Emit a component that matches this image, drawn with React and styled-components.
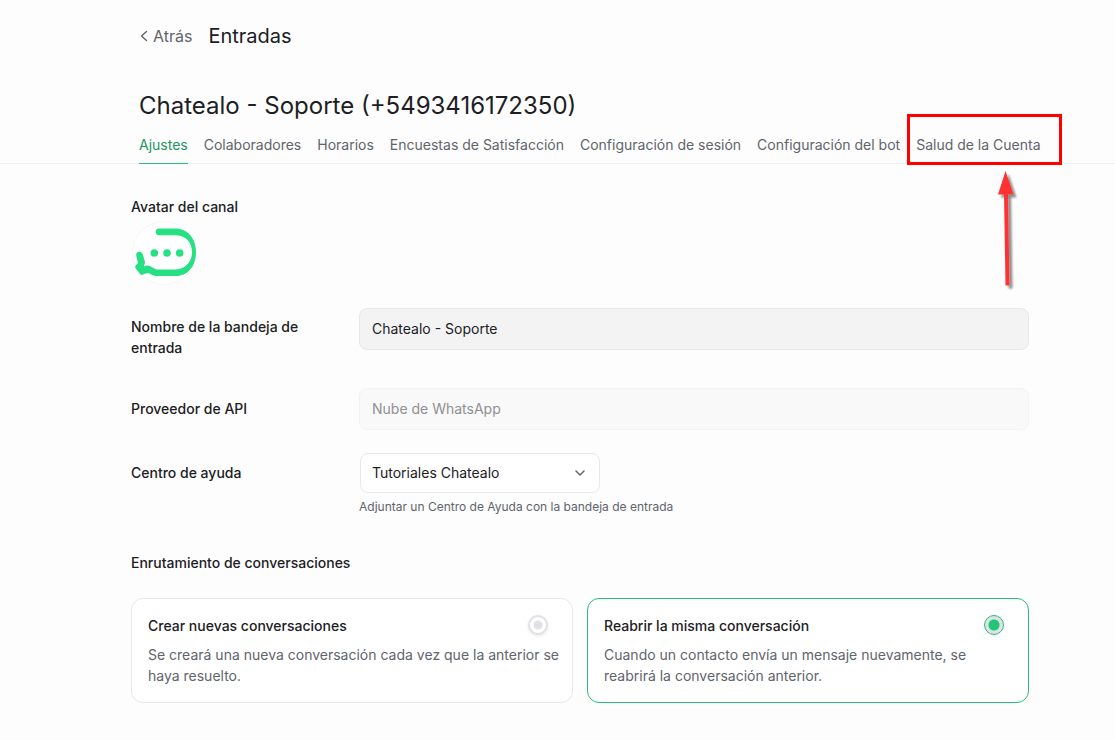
import React, { useState } from "react";
import styled, { createGlobalStyle, css } from "styled-components";

const GlobalStyle = createGlobalStyle`
  *, *::before, *::after { box-sizing: border-box; }
  body {
    margin: 0;
    background: #fdfdfd;
    color: #1c2024;
    font-family: Inter, "Liberation Sans", sans-serif;
    font-size: 14px;
    line-height: 21px;
  }
  h1, h2, h3, p { margin: 0; }
  button, input, select { font: inherit; color: inherit; }
`;

const Page = styled.div`
  padding-bottom: 36px;
`;

const TopBar = styled.header`
  display: flex;
  align-items: center;
  gap: 16px;
  height: 32px;
  margin: 20px 86px 36px 139px;
`;

const BackButton = styled.button`
  display: flex;
  align-items: center;
  gap: 4px;
  padding: 0;
  border: 0;
  background: none;
  color: #60646c;
  font-size: 16px;
  line-height: 24px;
  cursor: pointer;
`;

const PageTitle = styled.h1`
  font-size: 20px;
  line-height: 32px;
  font-weight: 400;
`;

const InboxTitle = styled.h2`
  padding-left: 139px;
  font-size: 24px;
  line-height: 36px;
  font-weight: 400;
`;

const TabBar = styled.nav`
  display: flex;
  gap: 16px;
  padding-left: 139px;
  border-bottom: 1px solid #f0f0f2;
`;

const Tab = styled.a`
  position: relative;
  flex: none;
  margin-bottom: -1px;
  padding: 10px 0 8px;
  border-bottom: 1px solid transparent;
  color: #60646c;
  text-decoration: none;
  white-space: nowrap;
  ${({ $active }) =>
    $active &&
    css`
      color: #1c9560;
      border-bottom-color: #24c078;
    `}
`;

const Highlight = styled.span`
  position: absolute;
  top: -10px;
  bottom: -2px;
  left: -9px;
  right: -21px;
  border: 3px solid #ff0000;
  pointer-events: none;
`;

const Arrow = styled.svg`
  position: absolute;
  top: 100%;
  left: 78px;
  overflow: visible;
  pointer-events: none;
`;

const Content = styled.main`
  padding: 32px 86px 0 131px;
`;

const Label = styled.label`
  display: block;
  font-weight: 500;
`;

const SectionLabel = styled.h3`
  font-size: 14px;
  line-height: 21px;
  font-weight: 500;
`;

const Avatar = styled.svg`
  display: block;
  margin-top: 4px;
`;

const Form = styled.form`
  display: flex;
  flex-direction: column;
  margin-top: 23px;
`;

const Row = styled.div`
  display: grid;
  grid-template-columns: 204px minmax(0, 1fr);
  column-gap: 24px;
  margin-bottom: ${({ $space }) => $space}px;

  > label { padding-top: ${({ $labelTop }) => $labelTop || 10}px; }
`;

const TextInput = styled.input`
  width: 100%;
  height: 42px;
  padding: 0 12px 2px;
  border: 1px solid #e8e8ea;
  border-radius: 8px;
  background: #f3f3f3;
  outline: none;

  &:disabled {
    background: #f9f9f9;
    border-color: #f3f3f4;
    color: #8f9093;
    -webkit-text-fill-color: #8f9093;
  }
`;

const SelectBox = styled.div`
  position: relative;
  width: 241px;
  padding-left: 1px;
`;

const Select = styled.select`
  display: block;
  width: 100%;
  height: 40px;
  padding: 0 32px 2px 11px;
  border: 1px solid #e8e8ea;
  border-radius: 8px;
  background: #ffffff;
  appearance: none;
  outline: none;
`;

const SelectChevron = styled.svg`
  position: absolute;
  right: 12px;
  top: 12px;
  pointer-events: none;
`;

const Help = styled.p`
  margin-top: 3px;
  color: #60646c;
  font-size: 12px;
`;

const Cards = styled.div`
  display: grid;
  grid-template-columns: 1fr 1fr;
  gap: 14px;
  margin-top: 25px;
`;

const Card = styled.label`
  display: flex;
  flex-direction: column;
  gap: 8px;
  padding: 16px 8px 16px 16px;
  border: 1px solid ${({ $checked }) => ($checked ? "#24c078" : "#e8e8ea")};
  border-radius: 12px;
  background: #ffffff;
  cursor: pointer;
`;

const CardHead = styled.span`
  display: flex;
  justify-content: space-between;
  align-items: flex-start;
  height: 21px;
  padding-right: 16px;
  font-weight: 500;
`;

const CardText = styled.span`
  color: #60646c;
`;

const Radio = styled.input`
  appearance: none;
  width: 20px;
  height: 20px;
  margin: 0;
  border: 2px solid #e0e1e6;
  border-radius: 50%;
  background: radial-gradient(circle, #e0e1e6 4px, #ffffff 5px);
  box-shadow: 0 1px 3px rgba(0, 0, 0, 0.1);

  &:checked {
    border: 1px solid #24c078;
    background: radial-gradient(circle, #1fc776 5px, #e0e1e6 6px);
    box-shadow: none;
  }
`;

const TABS = [
  "Ajustes",
  "Colaboradores",
  "Horarios",
  "Encuestas de Satisfacción",
  "Configuración de sesión",
  "Configuración del bot",
  "Salud de la Cuenta",
];

const ROUTING = [
  {
    id: "new",
    title: "Crear nuevas conversaciones",
    text: "Se creará una nueva conversación cada vez que la anterior se haya resuelto.",
  },
  {
    id: "reopen",
    title: "Reabrir la misma conversación",
    text: "Cuando un contacto envía un mensaje nuevamente, se reabrirá la conversación anterior.",
  },
];

function PointerArrow() {
  return (
    <Arrow width="40" height="126" viewBox="0 0 40 126" aria-hidden="true">
      <defs>
        <filter id="arrow-shadow" x="-50%" y="-10%" width="220%" height="125%">
          <feDropShadow dx="3" dy="3" stdDeviation="1.2" floodColor="#000" floodOpacity="0.45" />
        </filter>
      </defs>
      <path
        d="M11.5 8 L19.5 31.5 L14 31.5 L15.5 122.5 L11.5 122.5 L10 31.5 L4 31.5 Z"
        fill="#ff3333"
        filter="url(#arrow-shadow)"
      />
    </Arrow>
  );
}

function ChannelAvatar() {
  return (
    <Avatar width="65" height="64" viewBox="-1 0 65 64" role="img" aria-label="Chatealo">
      <circle cx="32" cy="32" r="31.5" fill="#ffffff" stroke="#f5f5f6" />
      <path
        d="M27 7.6 H43 C56 7.6 64 18 64 31 C64 45 56 55 44 55 H25 C21 55 19 53.5 16.5 52 C14 52 12 53.5 9 54 L3 46.5 C3 44.5 5 43.5 6 42 L4.5 36 C3.6 32 5 30.7 7.5 30.7 C9.5 30.7 10.5 32 11 34 L13 41 C13.2 42.5 12 44 12 45.5 C14 44.5 16 44 18 45 C21 46.5 23 48.5 26 48.5 H43 C53 48.5 60 41 60 31.5 C60 21 54 14.2 43 14.2 H27 C22.7 14.2 22.7 7.6 27 7.6 Z"
        fill="#26e083"
      />
      <circle cx="22.3" cy="32" r="3.8" fill="#26e083" />
      <circle cx="35" cy="32" r="3.8" fill="#26e083" />
      <circle cx="47.7" cy="32" r="3.8" fill="#26e083" />
    </Avatar>
  );
}

export default function App() {
  const [name, setName] = useState("Chatealo - Soporte");
  const [routing, setRouting] = useState("reopen");

  return (
    <Page>
      <GlobalStyle />
      <TopBar>
        <BackButton type="button">
          <svg width="10" height="12" viewBox="0 0 10 12" fill="none" stroke="currentColor" strokeWidth="1.4" strokeLinecap="round" strokeLinejoin="round" aria-hidden="true">
            <path d="M7.5 1.5 L2.5 6 L7.5 10.5" />
          </svg>
          Atrás
        </BackButton>
        <PageTitle>Entradas</PageTitle>
      </TopBar>

      <InboxTitle>Chatealo - Soporte (+5493416172350)</InboxTitle>
      <TabBar>
        {TABS.map((tab, i) => (
          <Tab key={tab} href="#" $active={i === 0}>
            {tab}
            {i === TABS.length - 1 && (
              <>
                <Highlight />
                <PointerArrow />
              </>
            )}
          </Tab>
        ))}
      </TabBar>

      <Content>
        <SectionLabel>Avatar del canal</SectionLabel>
        <ChannelAvatar />

        <Form>
          <Row $space={30} $labelTop={8}>
            <Label htmlFor="name">Nombre de la bandeja de entrada</Label>
            <TextInput id="name" value={name} onChange={(e) => setName(e.target.value)} />
          </Row>
          <Row $space={23}>
            <Label htmlFor="provider">Proveedor de API</Label>
            <TextInput id="provider" value="Nube de WhatsApp" disabled readOnly />
          </Row>
          <Row $space={35} $labelTop={9}>
            <Label htmlFor="help-center">Centro de ayuda</Label>
            <div>
              <SelectBox>
                <Select id="help-center" defaultValue="tutorials">
                  <option value="tutorials">Tutoriales Chatealo</option>
                </Select>
                <SelectChevron width="16" height="16" viewBox="0 0 16 16" fill="none" stroke="#60646c" strokeWidth="1.5" strokeLinecap="round" strokeLinejoin="round" aria-hidden="true">
                  <path d="M4 6 L8 10 L12 6" />
                </SelectChevron>
              </SelectBox>
              <Help>Adjuntar un Centro de Ayuda con la bandeja de entrada</Help>
            </div>
          </Row>

          <SectionLabel id="routing-title">Enrutamiento de conversaciones</SectionLabel>
          <Cards role="radiogroup" aria-labelledby="routing-title">
            {ROUTING.map((option) => (
              <Card key={option.id} $checked={routing === option.id}>
                <CardHead>
                  {option.title}
                  <Radio
                    type="radio"
                    name="routing"
                    checked={routing === option.id}
                    onChange={() => setRouting(option.id)}
                  />
                </CardHead>
                <CardText>{option.text}</CardText>
              </Card>
            ))}
          </Cards>
        </Form>
      </Content>
    </Page>
  );
}
